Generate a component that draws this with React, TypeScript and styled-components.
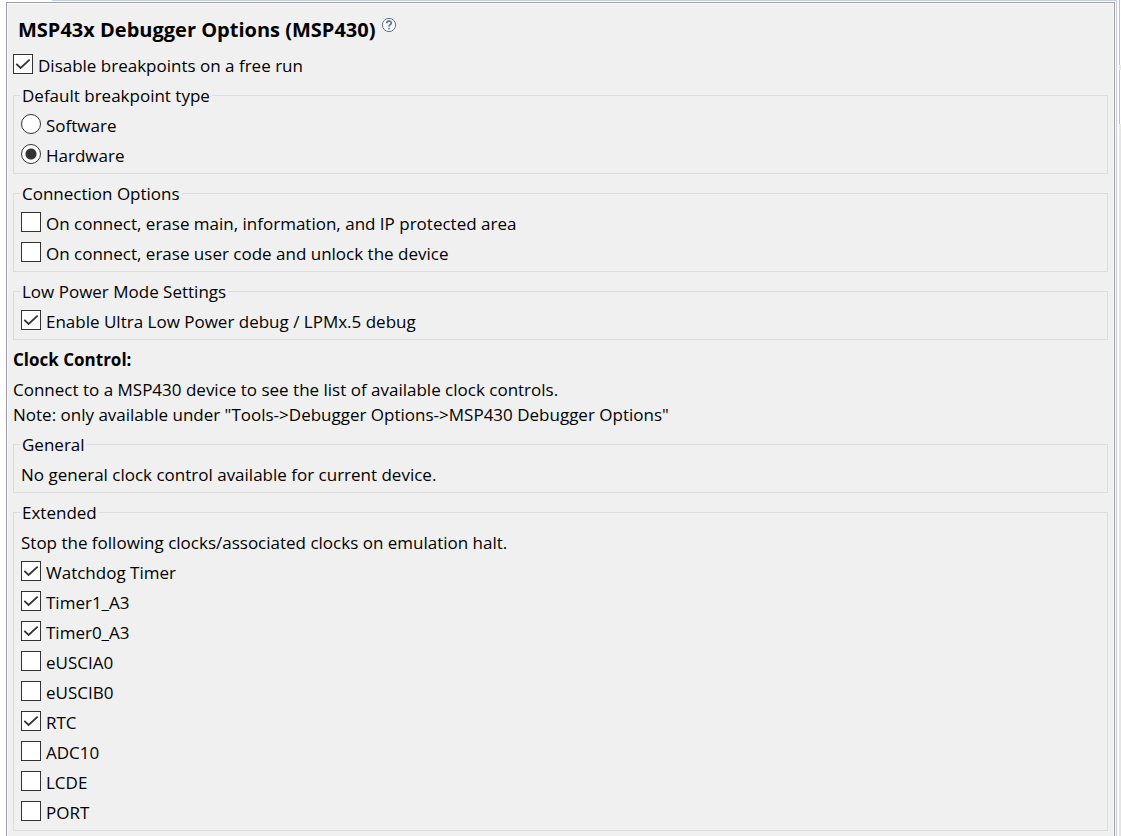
import React from 'react';
import styled, { createGlobalStyle } from 'styled-components';

const GlobalStyle = createGlobalStyle`
  *, *::before, *::after { box-sizing: border-box; }
  body {
    margin: 0;
    background: #fff;
    color: #000;
    font-family: "Segoe UI", "Open Sans", "Noto Sans", sans-serif;
    font-size: 17px;
    line-height: 24px;
  }
`;

const Page = styled.div`
  display: flex;
  min-height: 100vh;
  padding-left: 6px;
`;

const Frame = styled.div`
  flex: 1;
  display: flex;
  flex-direction: column;
  padding-right: 1px;
  border-right: 1px solid #c8cce4;
`;

const TabLine = styled.div`
  height: 1px;
  margin: 0 -1px 1px 46px;
  background: #c8cce4;
`;

const Panel = styled.main`
  flex: 1;
  padding: 12px 6px 0;
  background: #f0f0f0;
  border: 1px solid #a0a0a8;
  border-bottom: 0;
  box-shadow: inset 0 1px #fafafa, inset 1px 0 #fafafa, inset -1px 0 #fafafa;
`;

const Rail = styled.div`
  display: flex;
  flex-direction: column;
  width: 4px;
  padding-left: 2px;
`;

const RailPart = styled.div<{ $height: number; $line: string; $fill: string }>`
  height: ${(p) => p.$height}px;
  border-left: 1px solid ${(p) => p.$line};
  background: ${(p) => p.$fill};
`;

const RailRest = styled.div`
  flex: 1;
  background: #e4e4e4;
`;

const Header = styled.header`
  display: flex;
  align-items: flex-start;
  gap: 5px;
  height: 35px;
  padding-left: 5px;
`;

const Title = styled.h1`
  margin: 0;
  font-size: 20px;
  line-height: 30px;
  font-weight: 700;
`;

const HelpButton = styled.button`
  width: 16px;
  height: 16px;
  margin-top: 2px;
  padding: 0;
  border: 0;
  background: none;
  svg { display: block; }
`;

const Option = styled.label`
  display: flex;
  align-items: flex-start;
  gap: 5px;
  width: max-content;
  height: 30px;
  padding-top: 4px;
`;

const Mark = styled.input`
  appearance: none;
  flex: none;
  width: 20px;
  height: 20px;
  margin: 0;
  border: 1px solid #333;
  background: #fff;
`;

const Check = styled(Mark)`
  &:checked {
    background: #fff url("data:image/svg+xml,%3Csvg xmlns='http://www.w3.org/2000/svg' viewBox='0 0 18 18'%3E%3Cpath d='M2.300 8.800 6.600 13 15.700 4.700' fill='none' stroke='%23333' stroke-width='1.800'/%3E%3C/svg%3E");
  }
`;

const Radio = styled(Mark)`
  border-radius: 50%;
  &:checked { background: radial-gradient(circle, #333 0 5px, #fff 6px); }
`;

const Group = styled.fieldset`
  min-width: 0;
  margin: 0 0 4px;
  padding: 0 7px 3px;
  border: 1px solid #dcdcdc;
`;

const Legend = styled.legend`
  height: 30px;
  margin-left: -1px;
  padding: 0 2px;
  line-height: 32px;
`;

const Subheading = styled.h2`
  margin: 8px 0 5px;
  font-size: 17px;
  line-height: 24px;
  font-weight: 700;
`;

const Notes = styled.p`
  margin: 0 0 2px;
  line-height: 25px;
`;

const Message = styled.p`
  margin: 0;
  padding-top: 4px;
  height: 30px;
`;

const clocks = [
  { name: 'Watchdog Timer', on: true },
  { name: 'Timer1_A3', on: true },
  { name: 'Timer0_A3', on: true },
  { name: 'eUSCIA0', on: false },
  { name: 'eUSCIB0', on: false },
  { name: 'RTC', on: true },
  { name: 'ADC10', on: false },
  { name: 'LCDE', on: false },
  { name: 'PORT', on: false },
];

function CheckOption({ text, on = false }: { text: string; on?: boolean }) {
  return (
    <Option>
      <Check type="checkbox" defaultChecked={on} />
      <span>{text}</span>
    </Option>
  );
}

function RadioOption({ text, on = false }: { text: string; on?: boolean }) {
  return (
    <Option>
      <Radio type="radio" name="breakpoint-type" defaultChecked={on} />
      <span>{text}</span>
    </Option>
  );
}

export default function App() {
  return (
    <>
      <GlobalStyle />
      <Page>
        <Frame>
          <TabLine />
          <Panel>
            <Header>
              <Title>MSP43x Debugger Options (MSP430)</Title>
              <HelpButton type="button" aria-label="Help">
                <svg width="16" height="16" viewBox="0 0 16 16" fill="none" stroke="#5b6f8c">
                  <circle cx="8" cy="8" r="6.6" fill="#f8fafc" />
                  <path d="M5.8 6.300c0-3 4.500-2.800 4.500-.3C10.300 7.700 8 7.600 8 9.500M8 10.800v1.500" strokeWidth="1.700" />
                </svg>
              </HelpButton>
            </Header>
            <CheckOption text="Disable breakpoints on a free run" on />
            <Group>
              <Legend>Default breakpoint type</Legend>
              <RadioOption text="Software" />
              <RadioOption text="Hardware" on />
            </Group>
            <Group>
              <Legend>Connection Options</Legend>
              <CheckOption text="On connect, erase main, information, and IP protected area" />
              <CheckOption text="On connect, erase user code and unlock the device" />
            </Group>
            <Group>
              <Legend>Low Power Mode Settings</Legend>
              <CheckOption text="Enable Ultra Low Power debug / LPMx.5 debug" on />
            </Group>
            <Subheading>Clock Control:</Subheading>
            <Notes>
              Connect to a MSP430 device to see the list of available clock controls.
              <br />
              Note: only available under "Tools-&gt;Debugger Options-&gt;MSP430 Debugger Options"
            </Notes>
            <Group>
              <Legend>General</Legend>
              <Message>No general clock control available for current device.</Message>
            </Group>
            <Group>
              <Legend>Extended</Legend>
              <Message>Stop the following clocks/associated clocks on emulation halt.</Message>
              {clocks.map((c) => (
                <CheckOption key={c.name} text={c.name} on={c.on} />
              ))}
            </Group>
          </Panel>
        </Frame>
        <Rail>
          <RailPart $height={65} $line="#c4c0b8" $fill="#fff" />
          <RailPart $height={5} $line="#ece9d8" $fill="#ece9d8" />
          <RailPart $height={54} $line="#c4c0b8" $fill="#fff" />
          <RailPart $height={5} $line="#ece9d8" $fill="#ece9d8" />
          <RailRest />
        </Rail>
      </Page>
    </>
  );
}
